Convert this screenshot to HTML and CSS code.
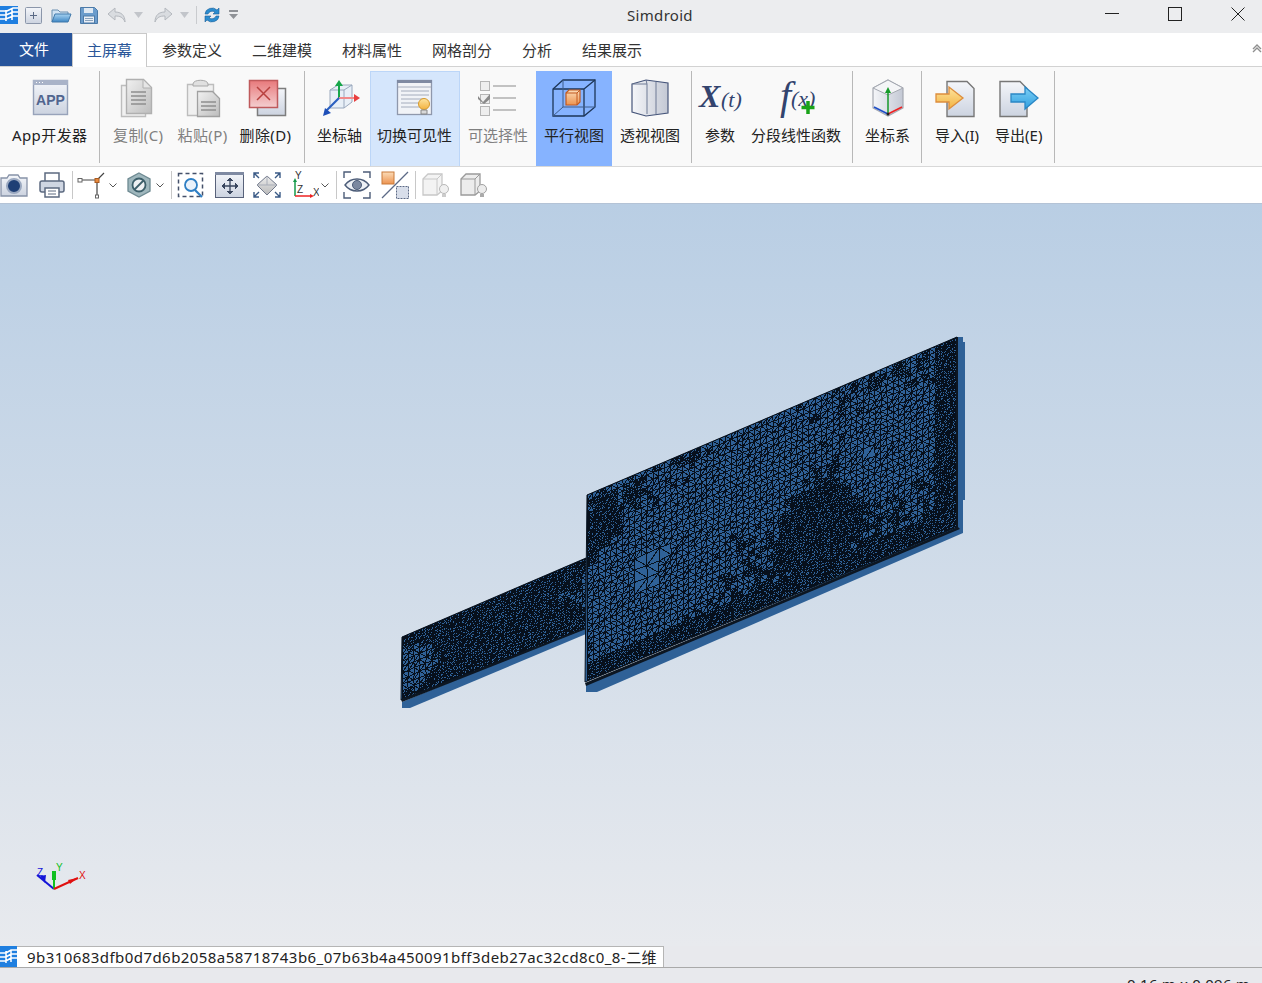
FILE: index.html
```html
<!DOCTYPE html>
<html lang="zh">
<head>
<meta charset="utf-8">
<title>Simdroid</title>
<link rel="stylesheet" href="styles.css">
</head>
<body>
<svg class="defs" aria-hidden="true">
  <defs>
    <linearGradient id="gPage" x1="0" y1="0" x2="0" y2="1"><stop offset="0" stop-color="#f4f6fa"/><stop offset="1" stop-color="#ccd3e0"/></linearGradient>
    <linearGradient id="gGrey" x1="0" y1="0" x2="0" y2="1"><stop offset="0" stop-color="#eeeeee"/><stop offset="1" stop-color="#b8b8b8"/></linearGradient>
    <linearGradient id="gDoc" x1="0" y1="0" x2="1" y2="1"><stop offset="0" stop-color="#f0f0f0"/><stop offset="1" stop-color="#bdbdbd"/></linearGradient>
    <linearGradient id="gRed" x1="0" y1="0" x2="0" y2="1"><stop offset="0" stop-color="#e8797b"/><stop offset="1" stop-color="#f4cfd0"/></linearGradient>
    <linearGradient id="gOrange" x1="0" y1="0" x2="0" y2="1"><stop offset="0" stop-color="#fbdcb8"/><stop offset="1" stop-color="#ed9350"/></linearGradient>
    <linearGradient id="gYellow" x1="0" y1="0" x2="0" y2="1"><stop offset="0" stop-color="#fde4a0"/><stop offset="1" stop-color="#f3b23f"/></linearGradient>
    <linearGradient id="gBlue" x1="0" y1="0" x2="0" y2="1"><stop offset="0" stop-color="#7fd0f5"/><stop offset="1" stop-color="#2f9fe0"/></linearGradient>
    <linearGradient id="gCube" x1="0" y1="0" x2="1" y2="0"><stop offset="0" stop-color="#f5f6f9"/><stop offset="1" stop-color="#c3c8d4"/></linearGradient>
    <linearGradient id="gFolder" x1="0" y1="0" x2="0" y2="1"><stop offset="0" stop-color="#a8d3f2"/><stop offset="1" stop-color="#3f87c4"/></linearGradient>
    <clipPath id="clipSmall"><path d="M402 637L586 558V628L401 700z"/></clipPath>
    <clipPath id="clipLarge"><path d="M587 495L957 337V527L585 682z"/></clipPath>
  </defs>
</svg>

<header class="titlebar">
  <div class="qat">
    <svg class="qi" width="18" height="18" viewBox="0 0 18 18"><rect width="18" height="18" fill="#1f7fe0"/><path d="M0 5h7l6-3h5M0 9h6l7-3h5M0 13h6l7-3h5M6 4v11M12 3v11" stroke="#fff" stroke-width="1.600" fill="none"/></svg>
    <svg class="qi gap7" width="18" height="18" viewBox="0 0 18 18"><rect x=".5" y="1.500" width="16" height="16" rx="1" fill="url(#gPage)" stroke="#8b96aa"/><path d="M8.500 6v7M5 9.500h7" stroke="#5a6a86" fill="none"/></svg>
    <svg class="qi gap8" width="21" height="18" viewBox="0 0 21 18"><path d="M1 16V4h6l2 2h8v3" fill="#cfe2f3" stroke="#6b8fb0"/><path d="M1 16l3-8h16l-3 8z" fill="url(#gFolder)" stroke="#3f78aa"/></svg>
    <svg class="qi gap8" width="18" height="18" viewBox="0 0 18 18"><path d="M.5 1.500h14l3 3v13H.5z" fill="#6b9ccc" stroke="#4c7aa8"/><rect x="4" y="2" width="9" height="5" fill="#dfe9f3"/><rect x="3.500" y="10" width="11" height="7" fill="#e9eef5" stroke="#4c7aa8"/><path d="M5 12.500h8M5 14.500h8" stroke="#8aa3bd"/></svg>
    <svg class="qi gap9" width="20" height="18" viewBox="0 0 20 18"><path d="M8 2L1 8l7 6v-4c5 0 8 1 10 6 0-7-4-10-10-10z" fill="#d9dce0" stroke="#b4b8be"/></svg>
    <svg class="qi gap7" width="9" height="6" viewBox="0 0 9 6"><path d="M0 0h9L4.500 6z" fill="#c2c5ca"/></svg>
    <svg class="qi gap10" width="20" height="18" viewBox="0 0 20 18"><path d="M12 2l7 6-7 6v-4C7 10 4 11 2 16 2 9 6 6 12 6z" fill="#d9dce0" stroke="#b4b8be"/></svg>
    <svg class="qi gap7" width="9" height="6" viewBox="0 0 9 6"><path d="M0 0h9L4.500 6z" fill="#c2c5ca"/></svg>
    <span class="qsep"></span>
    <svg class="qi gap7" width="16" height="18" viewBox="0 0 16 18"><path d="M1 8a7 6.500 0 0 1 12-4l2-2v6H9l2-2a4.500 4 0 0 0-7 2z" fill="#2b8ccf" stroke="#1d5f99" stroke-width=".6"/><path d="M15 10a7 6.500 0 0 1-12 4l-2 2v-6h6l-2 2a4.500 4 0 0 0 7-2z" fill="#2b8ccf" stroke="#1d5f99" stroke-width=".6"/></svg>
    <svg class="qi gap9" width="9" height="10" viewBox="0 0 9 10"><path d="M0 0h9v2H0zM0 4h9L4.500 9z" fill="#8f9297"/></svg>
  </div>
  <div class="apptitle">Simdroid</div>
  <div class="winctl">
    <svg width="16" height="16" viewBox="0 0 16 16"><path d="M1 7.500h14" stroke="#222" fill="none"/></svg>
    <svg width="16" height="16" viewBox="0 0 16 16"><rect x="1.500" y="1.500" width="13" height="13" fill="none" stroke="#222"/></svg>
    <svg width="16" height="16" viewBox="0 0 16 16"><path d="M1.500 1.500l13 13M14.500 1.500l-13 13" stroke="#222" fill="none"/></svg>
  </div>
</header>

<nav class="tabs">
  <div class="tab-file">文件</div>
  <div class="tab tab-active">主屏幕</div>
  <div class="tab">参数定义</div>
  <div class="tab">二维建模</div>
  <div class="tab">材料属性</div>
  <div class="tab">网格剖分</div>
  <div class="tab">分析</div>
  <div class="tab">结果展示</div>
  <svg class="collapse" width="10" height="9" viewBox="0 0 10 9"><path d="M1 5l4-4 4 4M1 8l4-4 4 4" fill="none" stroke="#8f8f8f" stroke-width="1.400"/></svg>
</nav>

<section class="ribbon">
  <div class="group g1">
    <div class="item p8">
      <svg class="ri" viewBox="0 0 44 40"><rect x="5.500" y="2.500" width="34" height="34" fill="url(#gPage)" stroke="#98a3ba" stroke-width="1.400"/><rect x="5" y="2" width="35" height="5" fill="#a9b3c8"/><path d="M8 4.500h1M11 4.500h1M14 4.500h1" stroke="#fff"/><text x="22.500" y="27" class="apptxt">APP</text></svg>
      <span class="lbl lat">App开发器</span>
    </div>
  </div>
  <div class="group g2">
    <div class="item p7 off">
      <svg class="ri" viewBox="0 0 44 40"><path d="M5.500 7.500h24v31h-24z" fill="#f1f1f1" stroke="#bdbdbd" stroke-width="1.400"/><path d="M10.500 1.500h17l8 8v26h-25z" fill="url(#gDoc)" stroke="#b0b0b0" stroke-width="1.400"/><path d="M27 2v8h8" fill="#e6e6e6" stroke="#b0b0b0"/><path d="M15 14h15M15 18h15M15 22h15M15 26h15" stroke="#8f8f8f" stroke-width="1.300"/></svg>
      <span class="lbl lat">复制(C)</span>
    </div>
    <div class="item p7 off">
      <svg class="ri" viewBox="0 0 44 40"><path d="M6.500 6.500h26v31h-26z" fill="#f0f0f0" stroke="#bdbdbd" stroke-width="1.400"/><path d="M12 6c0-5 15-5 15 0v2H12z" fill="#e0e0e0" stroke="#a8a8a8"/><path d="M16.500 13.500h15l7 7v18h-22z" fill="url(#gDoc)" stroke="#a0a0a0" stroke-width="1.300"/><path d="M20 24h15M20 28h15M20 32h15" stroke="#8f8f8f" stroke-width="1.300"/></svg>
      <span class="lbl lat">粘贴(P)</span>
    </div>
    <div class="item p7 pull">
      <svg class="ri" viewBox="0 0 44 40"><rect x="13.500" y="10.500" width="28" height="27" fill="url(#gPage)" stroke="#7d7d7d" stroke-width="1.500"/><rect x="5.500" y="2.500" width="28" height="27" fill="url(#gRed)" stroke="#bf5a5c" stroke-width="1.500"/><path d="M13 9l13 13M26 9L13 22" stroke="#b8413f" stroke-width="1.500"/></svg>
      <span class="lbl lat">删除(D)</span>
    </div>
  </div>
  <div class="group g3">
    <div class="item p8">
      <svg class="ri" viewBox="0 0 44 40"><path d="M12 12l8-5h14v17l-8 6H12z" fill="#e8eff7" stroke="#9aa8bd"/><path d="M12 12h14v18M26 12l8-5" fill="none" stroke="#9aa8bd"/><path d="M21 20V6" stroke="#18a64a" stroke-width="2"/><path d="M17 8l4-6 4 6z" fill="#18a64a"/><path d="M21 20h17" stroke="#f08a8a" stroke-width="2"/><path d="M36 16l6 4-6 4z" fill="#e84040"/><path d="M21 20L8 33" stroke="#2a5fc0" stroke-width="2.200"/><path d="M5 38l2-8 6 5z" fill="#1f4fb8"/></svg>
      <span class="lbl">坐标轴</span>
    </div>
    <div class="item p7 hover">
      <svg class="ri" viewBox="0 0 44 40"><rect x="4.500" y="2.500" width="34" height="34" fill="#f1f3f7" stroke="#8f98ac" stroke-width="1.300"/><rect x="4" y="2" width="35" height="3" fill="#7f8aa2"/><path d="M5 9h33M8 13h28M8 17h28M8 21h24M8 25h22M8 29h20" stroke="#a4acbc"/><circle cx="31" cy="26" r="5.500" fill="url(#gYellow)" stroke="#d79a2b"/><path d="M28 32h6v4h-6z" fill="#d8d8d8" stroke="#888"/></svg>
      <span class="lbl">切换可见性</span>
    </div>
    <div class="item p8 off">
      <svg class="ri" viewBox="0 0 44 40"><rect x="4.500" y="3.500" width="9" height="9" fill="#eee" stroke="#b5b5b5"/><rect x="4.500" y="16.500" width="9" height="9" fill="#eee" stroke="#b5b5b5"/><path d="M2 18l5 6 7-8v5l-6 5-6-5z" fill="#8a8a8a"/><rect x="4.500" y="28.500" width="9" height="9" fill="#eee" stroke="#b5b5b5"/><path d="M17 8h23M17 20h23M17 32h23" stroke="#b0b0b0" stroke-width="1.500"/></svg>
      <span class="lbl">可选择性</span>
    </div>
    <div class="item p8 active">
      <svg class="ri" viewBox="0 0 44 40"><path d="M11 2h32v27l-11 9H1V11z" fill="none" stroke="#1d3658" stroke-width="1.300"/><path d="M1 11h31v27M32 11L43 2" fill="none" stroke="#1d3658" stroke-width="1.300"/><path d="M11 2v27H43M11 29L1 38" fill="none" stroke="#3c5c8c"/><path d="M14 15l3-3h11v12l-3 3H14z" fill="url(#gOrange)" stroke="#c25a20" stroke-width="1.200"/><path d="M14 15h11v12M25 15l3-3" fill="none" stroke="#c25a20"/></svg>
      <span class="lbl">平行视图</span>
    </div>
    <div class="item p8">
      <svg class="ri" viewBox="0 0 44 40"><path d="M4 6l14-4 22 3v30l-22 3-14-4z" fill="url(#gCube)" stroke="#46557a" stroke-width="1.200"/><path d="M4 6h15v30M18 2l1 4M28 4v32" fill="none" stroke="#6e7a95"/></svg>
      <span class="lbl">透视视图</span>
    </div>
  </div>
  <div class="group g4">
    <div class="item p0">
      <svg class="ri" viewBox="0 0 44 40"><text x="1" y="29" class="fnx">X</text><text x="23" y="29" class="fnt">(t)</text></svg>
      <span class="lbl">参数</span>
    </div>
    <div class="item p9">
      <svg class="ri" viewBox="0 0 44 40"><text x="6" y="31" class="fnf">f</text><text x="17" y="28" class="fnt">(x)</text><path d="M34 23v13M27.500 29.500h13" stroke="#19a319" stroke-width="3.500"/></svg>
      <span class="lbl">分段线性函数</span>
    </div>
  </div>
  <div class="group g5">
    <div class="item p8">
      <svg class="ri" viewBox="0 0 44 40"><path d="M22 2l15 8v20l-15 8-15-8V10z" fill="url(#gCube)" stroke="#a4a8b1" stroke-width="1.200"/><path d="M7 10l15 7 15-7-15-8z" fill="#f4f5f7" stroke="#a4a8b1"/><path d="M22 36V12" stroke="#169a2a" stroke-width="1.500"/><path d="M19 15l3-6 3 6z" fill="#169a2a"/><path d="M22 36l14-7" stroke="#e22" stroke-width="1.800"/><path d="M22 36L8 29" stroke="#1f4fc8" stroke-width="1.800"/><circle cx="22" cy="36" r="1.500" fill="#222"/></svg>
      <span class="lbl">坐标系</span>
    </div>
  </div>
  <div class="group g6">
    <div class="item p7">
      <svg class="ri" viewBox="0 0 44 40"><path d="M12 3.500h20l7 7v28H12z" fill="url(#gPage)" stroke="#777" stroke-width="1.400"/><path d="M1 16h13v-7l14 11-14 11v-7H1z" fill="url(#gYellow)" stroke="#dd8d3c" stroke-width="1.300"/></svg>
      <span class="lbl">导入(I)</span>
    </div>
    <div class="item p7 push">
      <svg class="ri" viewBox="0 0 44 40"><path d="M3 3.500h20l7 7v28H3z" fill="url(#gPage)" stroke="#777" stroke-width="1.400"/><path d="M14 16h14v-7l13 11-13 11v-7H14z" fill="url(#gBlue)" stroke="#2a87c5" stroke-width="1.300"/></svg>
      <span class="lbl">导出(E)</span>
    </div>
  </div>
</section>

<section class="toolbar">
  <svg class="t0" width="28" height="28" viewBox="0 0 28 28"><path d="M1 7h6l2-3h9l2 3h7v18H1z" fill="url(#gPage)" stroke="#8792a8" stroke-width="1.300"/><circle cx="14" cy="15" r="7" fill="#1f3f75" stroke="#9aa8c0" stroke-width="2"/></svg>
  <svg class="t10" width="28" height="28" viewBox="0 0 28 28"><path d="M7 11V2h14v9" fill="#fff" stroke="#5c6a80" stroke-width="1.500"/><rect x="2" y="10" width="24" height="11" rx="2" fill="#cfd6e2" stroke="#5c6a80" stroke-width="1.500"/><path d="M7 17h14v9H7z" fill="#fff" stroke="#5c6a80" stroke-width="1.500"/><path d="M10 20h8M10 23h8" stroke="#5c6a80"/></svg>
  <span class="tsep s6"></span>
  <svg class="t4" width="32" height="28" viewBox="0 0 32 28"><path d="M3 9h17V26M20 9l7-7" fill="none" stroke="#444" stroke-width="1.200"/><rect x="1" y="7.500" width="4" height="3.500" fill="#fff" stroke="#666"/><rect x="18" y="7.500" width="4" height="4" fill="#e88a3c" stroke="#a85a20"/><rect x="18.500" y="24" width="3" height="3" fill="#fff" stroke="#666"/></svg>
  <svg class="t0" width="8" height="5" viewBox="0 0 8 5"><path d="M.5.500l3.500 3.500L7.500.500" fill="none" stroke="#555"/></svg>
  <svg class="t9" width="26" height="28" viewBox="0 0 26 28"><path d="M13 2l11 6v12l-11 6-11-6V8z" fill="#9fb7bd" stroke="#6e8a92" stroke-width="1.300"/><circle cx="13" cy="14" r="6.500" fill="#eef1f3" stroke="#3d5f6a" stroke-width="1.800"/><path d="M8.500 18.500l9-9" stroke="#3d5f6a" stroke-width="1.800"/></svg>
  <svg class="t4" width="8" height="5" viewBox="0 0 8 5"><path d="M.5.500l3.500 3.500L7.500.500" fill="none" stroke="#555"/></svg>
  <span class="tsep s7"></span>
  <svg class="t5" width="28" height="28" viewBox="0 0 28 28"><rect x="1.500" y="2.500" width="24" height="23" fill="none" stroke="#44506a" stroke-width="1.500" stroke-dasharray="4 3"/><circle cx="14" cy="14" r="6" fill="#eaf2fb" stroke="#2f7fc4" stroke-width="1.800"/><path d="M18 19l7 7" stroke="#2f7fc4" stroke-width="2.200"/></svg>
  <svg class="t10" width="30" height="28" viewBox="0 0 30 28"><rect x=".5" y="1.500" width="28" height="25" fill="url(#gPage)" stroke="#58627a"/><rect x="0" y="1" width="29" height="3" fill="#7f8aa2"/><path d="M15 8v14M8 15h14" stroke="#39465e" stroke-width="1.300"/><path d="M12 10l3-3 3 3M12 20l3 3 3-3M10 12l-3 3 3 3M20 12l3 3-3 3" fill="#39465e" stroke="#39465e"/></svg>
  <svg class="t7" width="30" height="28" viewBox="0 0 30 28"><path d="M15 5l10 9-10 10L5 14z" fill="url(#gGrey)" stroke="#70788a"/><path d="M15 5v9h10M15 14H5" fill="none" stroke="#a8adb8"/><path d="M2 7V2h5M2 2l5 5M28 7V2h-5M28 2l-5 5M2 21v5h5M2 26l5-5M28 21v5h-5M28 26l-5-5" stroke="#3a5a86" stroke-width="1.400" fill="none"/></svg>
  <svg class="t9" width="28" height="28" viewBox="0 0 28 28"><path d="M4 25V9" stroke="#169a4a" stroke-width="1.500"/><path d="M2 11l2-4 2 4z" fill="#169a4a"/><path d="M4 25h16" stroke="#e22" stroke-width="1.500"/><path d="M19 23l4 2-4 2z" fill="#e22"/><text x="4" y="8" class="tx">Y</text><text x="6" y="22" class="tx">Z</text><text x="22" y="25" class="tx">X</text></svg>
  <svg class="t2" width="8" height="5" viewBox="0 0 8 5"><path d="M.5.500l3.500 3.500L7.500.500" fill="none" stroke="#555"/></svg>
  <span class="tsep s7"></span>
  <svg class="t6" width="28" height="28" viewBox="0 0 28 28"><path d="M1 7V1h7M20 1h7v6M1 21v6h7M20 27h7v-6" fill="none" stroke="#4c5c78" stroke-width="1.400"/><path d="M2 14c6-8 18-8 24 0-6 8-18 8-24 0z" fill="#eef1f6" stroke="#4c5c78" stroke-width="1.400"/><circle cx="14" cy="14" r="4.500" fill="#7b88a0" stroke="#4c5c78"/></svg>
  <svg class="t10" width="28" height="28" viewBox="0 0 28 28"><rect x="1" y="1" width="12" height="12" fill="url(#gOrange)" stroke="#c97a3a"/><path d="M27 1L1 27" stroke="#5c6a86" stroke-width="1.300"/><rect x="15.500" y="15.500" width="12" height="12" fill="#d8deea" stroke="#5c6a86" stroke-dasharray="2 1"/></svg>
  <span class="tsep s6"></span>
  <svg class="t6" width="28" height="28" viewBox="0 0 28 28"><path d="M1 8l5-5h14v17l-5 4H1z" fill="#f3f3f3" stroke="#c8c8c8" stroke-width="1.300"/><path d="M1 8h14v16M15 8l5-5" fill="none" stroke="#c8c8c8"/><circle cx="22" cy="18" r="4.500" fill="#f0f0f0" stroke="#b8b8b8"/><path d="M20 23h4v3h-4z" fill="#ccc"/></svg>
  <svg class="t10" width="28" height="28" viewBox="0 0 28 28"><path d="M1 8l5-5h14v17l-5 4H1z" fill="#ececec" stroke="#9a9a9a" stroke-width="1.300"/><path d="M1 8h14v16M15 8l5-5" fill="none" stroke="#9a9a9a"/><circle cx="22" cy="18" r="4.500" fill="#ececec" stroke="#a0a0a0"/><path d="M20 23h4v3h-4z" fill="#aaa"/></svg>
</section>

<main class="viewport">
  <svg class="scene" viewBox="0 0 1262 742" width="1262" height="742">
    <g transform="translate(0 -204)">
      <!-- small plate -->
      <path d="M402 702v6h8L586 634V626z" fill="#2f6197"/>
      <path d="M402 637L586 558V628L401 700z" fill="#2f6197" stroke="#0a1420"/>
      <path id="meshSmall" class="mesh" clip-path="url(#clipSmall)" d=""/>
      <path d="M401 699L586 627V629L402 702z" fill="#0c1622"/>
      <!-- large plate -->
      <path d="M586 685v7h11L963 533V337h-7V526z" fill="#2f6197"/>
      <path d="M961 342h4v38h-4zM961 380v120h4V380z" fill="#2f6197"/>
      <path d="M587 495L957 337V527L585 682z" fill="#2f6197" stroke="#0a1420"/>
      <path id="meshLarge" class="mesh" clip-path="url(#clipLarge)" d=""/>
      <path d="M585 683L958 527 960 529 586 686z" fill="#0c1622"/>
      <path d="M956 337h2V528h-2z" fill="#0c1622"/>
      <!-- triad -->
      <g fill="none" stroke-width="2">
        <path d="M54 889L37 875" stroke="#1414d8"/>
        <path d="M54 889V872" stroke="#10c020"/>
        <path d="M54 889L78 878" stroke="#e01010"/>
      </g>
      <path d="M40 876l6-1-1 8z" fill="#1414d8"/>
      <path d="M52 871h4v9h-4z" fill="#10c020"/>
      <path d="M68 880l9-2-7 6z" fill="#e01010"/>
      <text x="37" y="876" class="ax axz">Z</text>
      <text x="56" y="871" class="ax axy">Y</text>
      <text x="79" y="879" class="ax axx">X</text>
    </g>
  </svg>
</main>

<footer class="docbar">
  <svg class="docicon" width="17" height="21" viewBox="0 0 17 21"><rect width="17" height="21" fill="#1f7fe0"/><path d="M0 7h6l5-3h6M0 11h6l5-3h6M0 15h6l5-3h6M6 5v12M11 4v12" stroke="#fff" stroke-width="1.500" fill="none"/></svg>
  <div class="doctab">9b310683dfb0d7d6b2058a58718743b6_07b63b4a450091bff3deb27ac32cd8c0_8-二维</div>
</footer>
<div class="status">0.16 m x 0.096 m</div>
<script src="mesh.js"></script>
</body>
</html>
```
FILE: styles.css
```css
* { box-sizing: border-box; }
html, body { margin: 0; padding: 0; }
body {
  width: 1262px;
  height: 983px;
  overflow: hidden;
  display: flex;
  flex-direction: column;
  background: #e8e9ed;
  color: #222;
  font: 15px/20px "Noto Sans", "Noto Sans CJK SC", sans-serif;
}
svg { display: block; flex: none; }
.defs { width: 0; height: 0; }

/* title bar */
.titlebar { height: 33px; flex: none; background: #ecedef; display: flex; align-items: center; }
.qat { width: 239px; display: flex; align-items: center; flex: none; margin-top: -4px; }
.gap7 { margin-left: 7px; }
.gap8 { margin-left: 8px; }
.gap9 { margin-left: 9px; }
.gap10 { margin-left: 10px; }
.qsep { width: 1px; height: 18px; background: #c9cbce; margin-left: 7px; }
.apptitle { flex: 1; text-align: center; color: #333; margin-top: -3px; letter-spacing: .3px; }
.winctl { flex: none; width: 181px; padding-left: 23px; display: flex; gap: 47px; margin-top: -6px; }

/* tabs */
.tabs { height: 34px; flex: none; background: #fff; border-bottom: 1px solid #d2d2d2; display: flex; }
.tab-file { width: 72px; height: 33px; background: #27549b; color: #fff; padding-left: 19px; line-height: 33px; }
.tab { padding: 0 15px; height: 33px; line-height: 34px; color: #333; }
.tab-active { height: 34px; width: 75px; border: 1px solid #c9c9c9; border-bottom: 0; background: #fff; color: #2a5699; padding: 0 14px; line-height: 32px; }
.collapse { margin: 11px 0 0 auto; }

/* ribbon */
.ribbon { height: 100px; flex: none; background: #f9f9f9; border-bottom: 1px solid #d8d8d8; display: flex; padding-top: 4px; }
.group { display: flex; border-right: 1px solid #b8b8b8; height: 92px; }
.item { display: flex; flex-direction: column; align-items: center; height: 95px; padding-top: 7px; }
.ri { width: 44px; height: 40px; overflow: visible; }
.lbl { margin-top: 7px; white-space: nowrap; }
.lat { letter-spacing: .4px; }
.p0 { width: 44px; }
.p7 { padding-left: 7px; padding-right: 7px; }
.p8 { padding-left: 8px; padding-right: 8px; }
.p9 { padding-left: 9px; padding-right: 9px; }
.pull { margin-left: -2px; }
.push { margin-left: 2px; }
.off { color: #808080; }
.hover { background: #d5e6fc; border: 1px solid #bcd6f8; border-bottom: 0; padding-top: 6px; padding-left: 6px; padding-right: 7px; width: 90px; }
.active { background: #86b3ff; }
.g1 { width: 100px; padding-left: 4px; }
.g2 { width: 205px; padding-left: 6px; }
.g3 { width: 387px; padding-left: 4px; }
.g4 { width: 161px; padding-left: 6px; }
.g5 { width: 69px; padding-left: 4px; }
.g6 { width: 133px; padding-left: 6px; }
.apptxt { font: bold 14px "Liberation Sans", sans-serif; fill: #51658f; text-anchor: middle; }
.fnx { font: italic bold 32px "Liberation Serif", serif; fill: #33446e; }
.fnt { font: italic 22px "Liberation Serif", serif; fill: #33446e; }
.fnf { font: italic 40px "Liberation Serif", serif; fill: #33446e; }

/* toolbar */
.toolbar { height: 37px; flex: none; background: #fff; border-bottom: 1px solid #b4c3d6; display: flex; align-items: center; }
.tsep { width: 1px; height: 28px; background: #c8c8c8; }
.t0 { margin-left: 0; }
.t2 { margin-left: 2px; }
.t4 { margin-left: 4px; }
.t5 { margin-left: 5px; }
.t6 { margin-left: 6px; }
.t7 { margin-left: 7px; }
.t9 { margin-left: 9px; }
.t10 { margin-left: 10px; }
.s6 { margin-left: 6px; }
.s7 { margin-left: 7px; }
.tx { font: 10px "Liberation Sans", sans-serif; fill: #333; }

/* viewport */
.viewport { flex: 1; min-height: 0; background: linear-gradient(#b9cee4, #e8eaee); position: relative; overflow: hidden; }
.scene { position: absolute; left: 0; top: 0; }
.mesh { fill: none; stroke: #07101c; stroke-width: 1; shape-rendering: crispEdges; }
.ax { font: 10px "Liberation Sans", sans-serif; }
.axz { fill: #1414d8; }
.axy { fill: #10c020; }
.axx { fill: #e01010; }

/* bottom bars */
.docbar { height: 22px; flex: none; display: flex; border-bottom: 1px solid #a9a9a9; }
.doctab { width: 647px; height: 21px; background: #fff; border-top: 1px solid #b5b5b5; border-right: 1px solid #b5b5b5; padding-left: 10px; line-height: 21px; white-space: nowrap; overflow: hidden; color: #222; letter-spacing: .44px; }
.status { height: 15px; flex: none; text-align: right; padding: 6px 12px 0 0; white-space: nowrap; letter-spacing: .2px; }
```
FILE: mesh.js
```js
// Draws the finite-element mesh of the two plates as an adaptive grid of triangles.
(function () {
  var SLOPE = -0.427;

  function hash(a, b) {
    var h = Math.sin(a * 12.9898 + b * 78.233) * 43758.5453;
    return h - Math.floor(h);
  }

  function blob(u, v, cu, cv, r) {
    var d = ((u - cu) * (u - cu) + (v - cv) * (v - cv)) / (r * r);
    return Math.exp(-d);
  }

  function build(id, ox, oy, w, h, base, minCell, sizeAt) {
    var parts = [];

    function pt(u, v) {
      var ku = Math.round(u * 10), kv = Math.round(v * 10);
      var ju = (u > 0 && u < w) ? (hash(ku, kv) - 0.5) * 1.2 : 0;
      var jv = (v > 0 && v < h) ? (hash(kv + 7, ku + 3) - 0.5) * 1.2 : 0;
      return (ox + u + ju).toFixed(1) + ' ' + (oy + SLOPE * u + v + jv).toFixed(1);
    }

    function cell(u, v, s) {
      var target = sizeAt(u + s / 2, v + s / 2) * (0.85 + 0.3 * hash(u + 1.3, v + 2.1));
      if (s > target && s / 2 >= minCell) {
        var m = s / 2;
        cell(u, v, m); cell(u + m, v, m); cell(u, v + m, m); cell(u + m, v + m, m);
        return;
      }
      parts.push('M' + pt(u, v + s) + 'L' + pt(u, v) + 'L' + pt(u + s, v));
      if (hash(u + 5.7, v + 9.1) > 0.5) {
        parts.push('M' + pt(u, v + s) + 'L' + pt(u + s, v));
      } else {
        parts.push('M' + pt(u, v) + 'L' + pt(u + s, v + s));
      }
    }

    for (var u = 0; u < w; u += base) {
      for (var v = 0; v < h; v += base) {
        cell(u, v, base);
      }
    }
    document.getElementById(id).setAttribute('d', parts.join(''));
  }

  build('meshLarge', 587, 495, 371, 195, 12, 3, function (u, v) {
    var s = 6.2;
    s += 7 * blob(u, v, 60, 105, 42);
    s += 6 * blob(u, v, 300, 80, 35);
    s += 3 * blob(u, v, 170, 45, 50);
    s -= 3 * blob(u, v, 235, 125, 42);
    s -= 3 * blob(u, v, 12, 40, 22);
    if (v > 165) s = 3;
    if (u > 350) s = 3;
    return s;
  });

  build('meshSmall', 402, 637, 185, 68, 12, 3, function (u, v) {
    var s = 4.5;
    s += 6 * blob(u, v, 12, 35, 18);
    s += 2 * blob(u, v, 175, 30, 20);
    if (v > 58) s = 3;
    return s;
  });
})();
```
